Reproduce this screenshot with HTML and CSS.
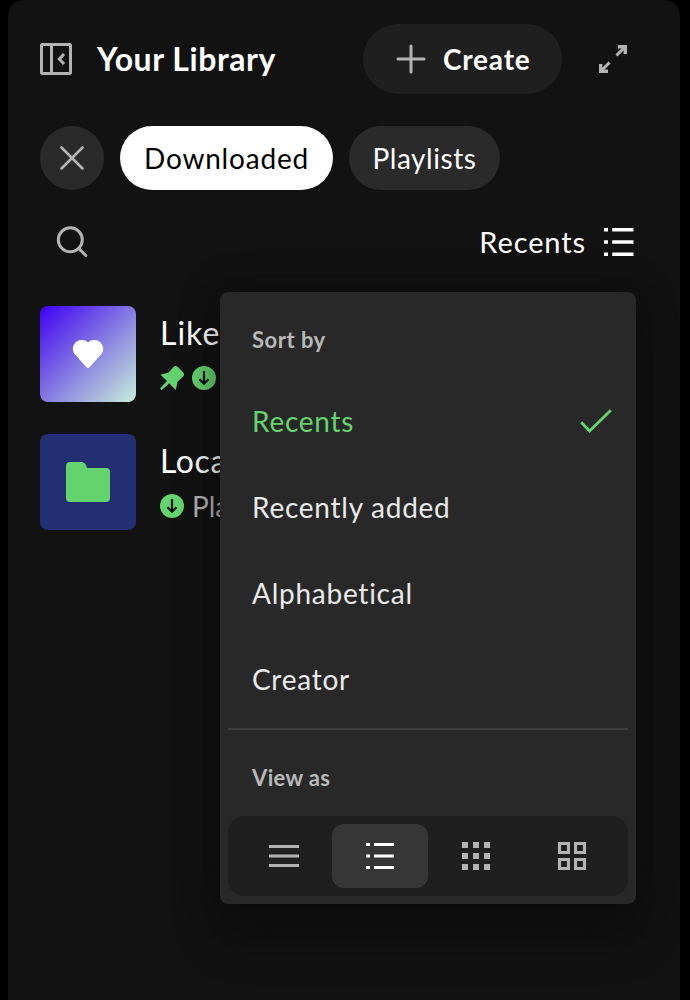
FILE: index.html
```html
<!DOCTYPE html>
<html lang="en">
<head>
<meta charset="utf-8">
<title>Your Library</title>
<link rel="stylesheet" href="styles.css">
</head>
<body>
<main class="panel">
  <header class="header">
    <svg class="collapse" width="32" height="32" viewBox="0 0 32 32" fill="none" stroke="currentColor" stroke-width="3"><rect x="1.5" y="1.5" width="29" height="29" rx="1"/><path d="M11.5 1v30"/><path d="M24 11l-4.7 5 4.7 5"/></svg>
    <h1 class="title">Your Library</h1>
    <button class="create">
      <svg width="30" height="30" viewBox="0 0 30 30" fill="none" stroke="currentColor" stroke-width="3" stroke-linecap="round"><path d="M15 2v26M2 15h26"/></svg>
      <span class="create-label">Create</span>
    </button>
    <svg class="expand" width="28" height="28" viewBox="0 0 28 28" fill="none" stroke="currentColor" stroke-width="3"><path d="M17.5 10.500L26 2M10.500 17.500L2 26"/><path d="M19 1.700h7.300V9M9 26.300H1.700V19" stroke-width="3.400"/></svg>
  </header>
  <nav class="chips">
    <button class="chip chip-clear"><svg width="24" height="24" viewBox="0 0 24 24" fill="none" stroke="currentColor" stroke-width="2.600" stroke-linecap="round"><path d="M1.500 1.500l21 21M22.500 1.500l-21 21"/></svg></button>
    <button class="chip chip-on"><span class="downloaded">Downloaded</span></button>
    <button class="chip"><span class="playlists">Playlists</span></button>
  </nav>
  <div class="tools">
    <svg width="32" height="32" viewBox="0 0 32 32" fill="none" stroke="currentColor" stroke-width="3"><circle cx="14.300" cy="13.800" r="12"/><path d="M22.800 22.500l7 7" stroke-linecap="round"/></svg>
    <div class="sort">
      <span class="sort-label">Recents</span>
      <svg width="30" height="28" viewBox="0 0 30 28" fill="currentColor"><path d="M0 0h4v3.500H0zM8.200 0H29.500v3.500H8.200zM0 12.200h4v3.500H0zM8.200 12.200H29.500v3.500H8.200zM0 24.400h4v3.500H0zM8.200 24.400H29.500v3.500H8.200z"/></svg>
    </div>
  </div>
  <section class="items">
    <article class="item">
      <div class="cover cover-liked"><svg width="32" height="30" viewBox="0 0 32 30" fill="#fff"><path d="M16 3.500C12.500.2 7 .3 3.500 3.500c-3.600 3.500-3.500 8.700-.2 12.200L14.200 28c1.100 1.200 2.500 1.200 3.600 0l10.900-12.300c3.300-3.500 3.400-8.700-.2-12.200C25 .3 19.500.2 16 3.500z"/></svg></div>
      <div class="info">
        <div class="name">Liked Songs</div>
        <div class="meta">
          <svg width="24" height="24" viewBox="0 0 24 24" fill="#65d46e"><path d="M13.300 1.200c1.400-1.500 3.200-1.600 4.600-.2l5.200 5.200c1.400 1.400 1.200 3.200-.2 4.600L17.500 15.700l-1.700 8.200-6.600-6.700L1.700 24.200 0 22.400l7-7.300L.6 8.800l8-2.400z"/></svg>
          <svg width="24" height="24" viewBox="0 0 24 24"><circle cx="12" cy="12" r="12" fill="#65d46e"/><path d="M12 5v12.500M7.500 13.200l4.500 4.500 4.500-4.500" fill="none" stroke="#121212" stroke-width="2.200"/></svg>
          <span>Playlist</span>
        </div>
      </div>
    </article>
    <article class="item">
      <div class="cover cover-local"><svg width="44" height="40" viewBox="0 0 44 40" fill="#65d46e"><path d="M4 0h11c3.500 0 5 2.400 6 6h19a4 4 0 0 1 4 4v26a4 4 0 0 1-4 4H4a4 4 0 0 1-4-4V4a4 4 0 0 1 4-4z"/></svg></div>
      <div class="info">
        <div class="name name-local">Local Files</div>
        <div class="meta">
          <svg width="24" height="24" viewBox="0 0 24 24"><circle cx="12" cy="12" r="12" fill="#65d46e"/><path d="M12 5v12.500M7.500 13.200l4.500 4.500 4.500-4.500" fill="none" stroke="#121212" stroke-width="2.200"/></svg>
          <span>Playlist</span>
        </div>
      </div>
    </article>
  </section>
  <div class="menu">
    <div class="menu-head"><span>Sort by</span></div>
    <div class="option option-on"><span>Recents</span><svg width="32" height="24" viewBox="0 0 32 24" fill="none" stroke="currentColor" stroke-width="2.800"><path d="M1.200 13.200l8.400 8.800L30.800 1.200"/></svg></div>
    <div class="option"><span>Recently added</span></div>
    <div class="option"><span>Alphabetical</span></div>
    <div class="option"><span>Creator</span></div>
    <div class="menu-head view-head"><span>View as</span></div>
    <div class="views">
      <button class="view"><svg width="30" height="22" viewBox="0 0 30 22" fill="currentColor"><path d="M0 0h30v3H0zM0 9.500h30v3H0zM0 19h30v3H0z"/></svg></button>
      <button class="view view-on"><svg width="28" height="26" viewBox="0 0 28 26" fill="currentColor"><path d="M0 0h4v3H0zM8 0h20v3H8zM0 11.500h4v3H0zM8 11.500h20v3H8zM0 23h4v3H0zM8 23h20v3H8z"/></svg></button>
      <button class="view"><svg width="28" height="28" viewBox="0 0 28 28" fill="currentColor"><path d="M0 0h6v6H0zM11 0h6v6h-6zM22 0h6v6h-6zM0 11h6v6H0zM11 11h6v6h-6zM22 11h6v6h-6zM0 22h6v6H0zM11 22h6v6h-6zM22 22h6v6h-6z"/></svg></button>
      <button class="view"><svg width="28" height="28" viewBox="0 0 28 28" fill="none" stroke="currentColor" stroke-width="3"><path d="M1.500 1.500h9v9h-9zM17.500 1.500h9v9h-9zM1.500 17.500h9v9h-9zM17.500 17.500h9v9h-9z"/></svg></button>
    </div>
  </div>
</main>
</body>
</html>
```
FILE: styles.css
```css
* { box-sizing: border-box; }
body { margin: 0; background: #000; height: 1000px; overflow: hidden; font-family: Lato, "Open Sans", sans-serif; font-size: 28px; font-variant-ligatures: none; color: #fff; }
svg { display: block; flex: none; }
span { white-space: nowrap; }
button { border: 0; padding: 0; font: inherit; font-variant-ligatures: none; color: inherit; background: none; }
.panel { position: relative; margin: 0 10px 0 8px; height: 1020px; padding: 24px 32px; background: #121212; border-radius: 16px; }
.header { display: flex; align-items: center; height: 70px; color: #b3b3b3; }
.title { margin: 0 0 0 25px; padding-bottom: 2px; width: 266px; font-size: 32px; font-weight: 700; letter-spacing: .55px; color: #fff; white-space: nowrap; }
.create { display: flex; align-items: center; width: 199px; height: 70px; padding-left: 33px; gap: 17px; border-radius: 35px; background: #1f1f1f; }
.create-label { color: #fff; font-weight: 700; letter-spacing: .8px; }
.expand { margin-left: 37px; }
.chips { display: flex; gap: 16px; margin-top: 32px; }
.chip { height: 64px; width: 151px; border-radius: 32px; background: #2a2a2a; display: flex; align-items: center; justify-content: center; }
.chip-clear { width: 64px; color: #b3b3b3; }
.chip-on { width: 213px; background: #fff; color: #000; }
.downloaded { letter-spacing: .8px; }
.playlists { letter-spacing: .55px; }
.tools { display: flex; align-items: center; justify-content: space-between; height: 64px; margin-top: 20px; padding: 0 14px 0 16px; color: #b3b3b3; }
.sort { display: flex; align-items: center; gap: 18px; color: #fff; }
.sort-label { padding-bottom: 2px; font-size: 29px; letter-spacing: .9px; }
.items { display: flex; flex-direction: column; gap: 32px; margin-top: 32px; }
.item { display: flex; gap: 24px; height: 96px; }
.cover { width: 96px; height: 96px; border-radius: 8px; display: flex; align-items: center; justify-content: center; }
.cover-liked { background: linear-gradient(135deg, #3d00f2 0%, #8c85e0 55%, #c7eedb 100%); }
.cover-local { background: #232f72; }
.info { padding-top: 5px; }
.name { font-size: 32px; line-height: 44px; letter-spacing: 1px; white-space: nowrap; }
.name-local { letter-spacing: .6px; }
.meta { display: flex; align-items: center; gap: 8px; height: 46px; color: #b3b3b3; }
.menu { position: absolute; left: 212px; top: 292px; width: 416px; height: 612px; padding: 8px; border-radius: 8px; background: #282828; box-shadow: 0 32px 48px rgba(0,0,0,.3), 0 0 40px rgba(0,0,0,.3); }
.menu-head { display: flex; align-items: center; height: 78px; padding: 0 0 0 24px; font-size: 22px; font-weight: 700; letter-spacing: .5px; color: #b9b9b9; }
.option { display: flex; align-items: center; justify-content: space-between; height: 86px; padding: 0 16px 0 24px; letter-spacing: .75px; color: #eaeaea; }
.option-on { color: #65d46e; }
.view-head { height: 88px; margin-top: 6px; border-top: 2px solid #3e3e3e; padding-top: 9px; letter-spacing: .35px; }
.views { display: flex; height: 80px; padding: 8px; border-radius: 16px; background: #1f1f1f; color: #b3b3b3; }
.view { width: 96px; height: 64px; border-radius: 12px; display: flex; align-items: center; justify-content: center; }
.view-on { background: #363636; color: #fff; }
```
